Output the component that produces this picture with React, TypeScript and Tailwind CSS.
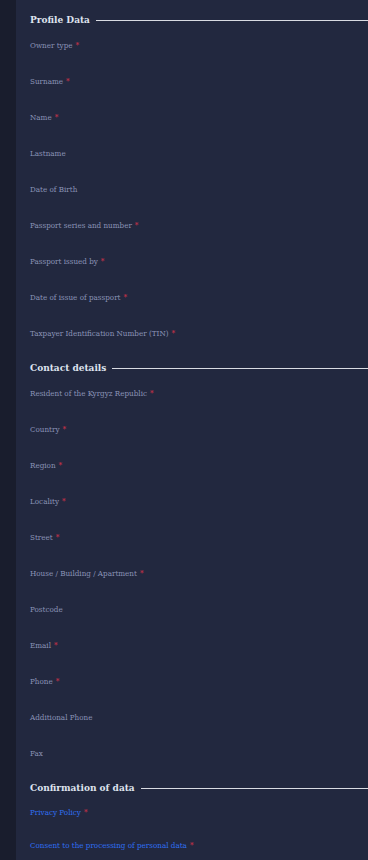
const profileFields: [string, boolean][] = [
  ['Owner type', true],
  ['Surname', true],
  ['Name', true],
  ['Lastname', false],
  ['Date of Birth', false],
  ['Passport series and number', true],
  ['Passport issued by', true],
  ['Date of issue of passport', true],
  ['Taxpayer Identification Number (TIN)', true],
]

const contactFields: [string, boolean][] = [
  ['Resident of the Kyrgyz Republic', true],
  ['Country', true],
  ['Region', true],
  ['Locality', true],
  ['Street', true],
  ['House / Building / Apartment', true],
  ['Postcode', false],
  ['Email', true],
  ['Phone', true],
  ['Additional Phone', false],
  ['Fax', false],
]

function SectionTitle({ title, first }: { title: string; first?: boolean }) {
  return (
    <div className={`flex items-center gap-[6px] h-4 ${first ? '' : 'mt-2'}`}>
      <h2 className="text-[10px] font-bold text-[#dfe3ee] whitespace-nowrap leading-none">{title}</h2>
      <div className="flex-1 h-px bg-[#d9dbe2]" />
    </div>
  )
}

function Field({ label, required, link }: { label: string; required: boolean; link?: boolean }) {
  return (
    <div className={`flex items-center ${link ? 'h-[33px]' : 'h-9'}`}>
      <label className={`text-[8px] leading-none ${link ? 'text-[#2f6ff2]' : 'text-[#8a93b6]'}`}>
        {label}
        {required && <span className="text-[#e0334a] ml-[3px]">*</span>}
      </label>
    </div>
  )
}

export default function App() {
  return (
    <div className="flex min-h-[860px] bg-[#22283f] font-['DejaVu_Serif',serif] font-stretch-condensed">
      <div className="w-4 shrink-0 bg-[#191d2d]" />
      <div className="flex-1 pl-[14px] pt-3 flex flex-col">
        <SectionTitle title="Profile Data" first />
        {profileFields.map(([l, r]) => (
          <Field key={l} label={l} required={r} />
        ))}
        <SectionTitle title="Contact details" />
        {contactFields.map(([l, r]) => (
          <Field key={l} label={l} required={r} />
        ))}
        <SectionTitle title="Confirmation of data" />
        <Field label="Privacy Policy" required link />
        <Field label="Consent to the processing of personal data" required link />
      </div>
    </div>
  )
}
